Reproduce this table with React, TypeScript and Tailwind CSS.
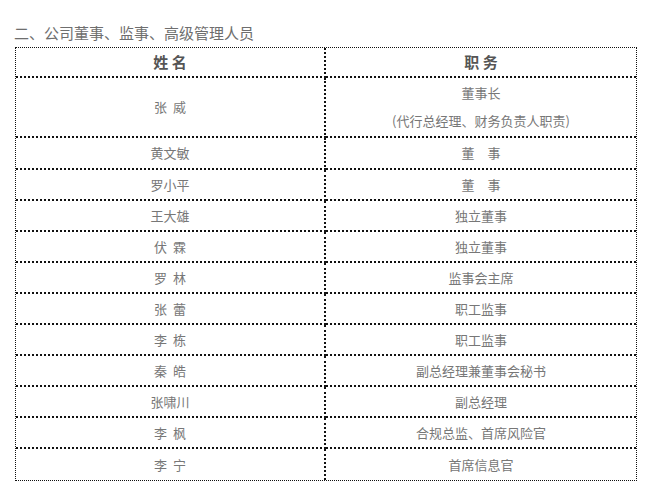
const rows: { name: string; role: string[] }[] = [
    { name: '张\u00a0\u00a0威', role: ['董事长', '(代行总经理、财务负责人职责)'] },
    { name: '黄文敏', role: ['董\u3000事'] },
    { name: '罗小平', role: ['董\u3000事'] },
    { name: '王大雄', role: ['独立董事'] },
    { name: '伏\u00a0\u00a0霖', role: ['独立董事'] },
    { name: '罗\u00a0\u00a0林', role: ['监事会主席'] },
    { name: '张\u00a0\u00a0蕾', role: ['职工监事'] },
    { name: '李\u00a0\u00a0栋', role: ['职工监事'] },
    { name: '秦\u00a0\u00a0皓', role: ['副总经理兼董事会秘书'] },
    { name: '张啸川', role: ['副总经理'] },
    { name: '李\u00a0\u00a0枫', role: ['合规总监、首席风险官'] },
    { name: '李\u00a0\u00a0宁', role: ['首席信息官'] },
];

function rowHeight(index: number) {
    if (index === 0) return 'h-[60px]';
    if (index === 1) return 'h-[32px]';
    return 'h-[31px]';
}

export default function App() {
    return (
        <div className="w-[660px] h-[490px] bg-white pt-[24px] pl-[14px] font-['Microsoft_YaHei','Noto_Sans_CJK_SC',sans-serif]">
            <h1 className="text-[15px] leading-[18px] text-[#6e6e6e] font-normal">二、公司董事、监事、高级管理人员</h1>

            <table className="mt-[5px] ml-px w-[622px] border-separate border-spacing-0 border border-dotted border-[#111] text-center">
                <thead>
                    <tr className="h-[30px]">
                        <th className="w-[310px] border-r-2 border-b-2 border-dotted border-[#111] text-[15px] font-bold text-[#555]">姓 名</th>
                        <th className="border-b-2 border-dotted border-[#111] text-[15px] font-bold text-[#555]">职 务</th>
                    </tr>
                </thead>
                <tbody>
                    {rows.map((row, index) => {
                        const last = index === rows.length - 1;
                        return (
                            <tr key={index} className={rowHeight(index)}>
                                <td className={`border-r-2 border-dotted border-[#111] text-[13px] text-[#777] whitespace-pre ${last ? '' : 'border-b-2'}`}>{row.name}</td>
                                <td className={`border-dotted border-[#111] text-[13px] text-[#777] ${last ? '' : 'border-b-2'}`}>
                                    {row.role.map((line, i) => (
                                        <div key={i} className="leading-[28px]">{line}</div>
                                    ))}
                                </td>
                            </tr>
                        );
                    })}
                </tbody>
            </table>
        </div>
    );
}
